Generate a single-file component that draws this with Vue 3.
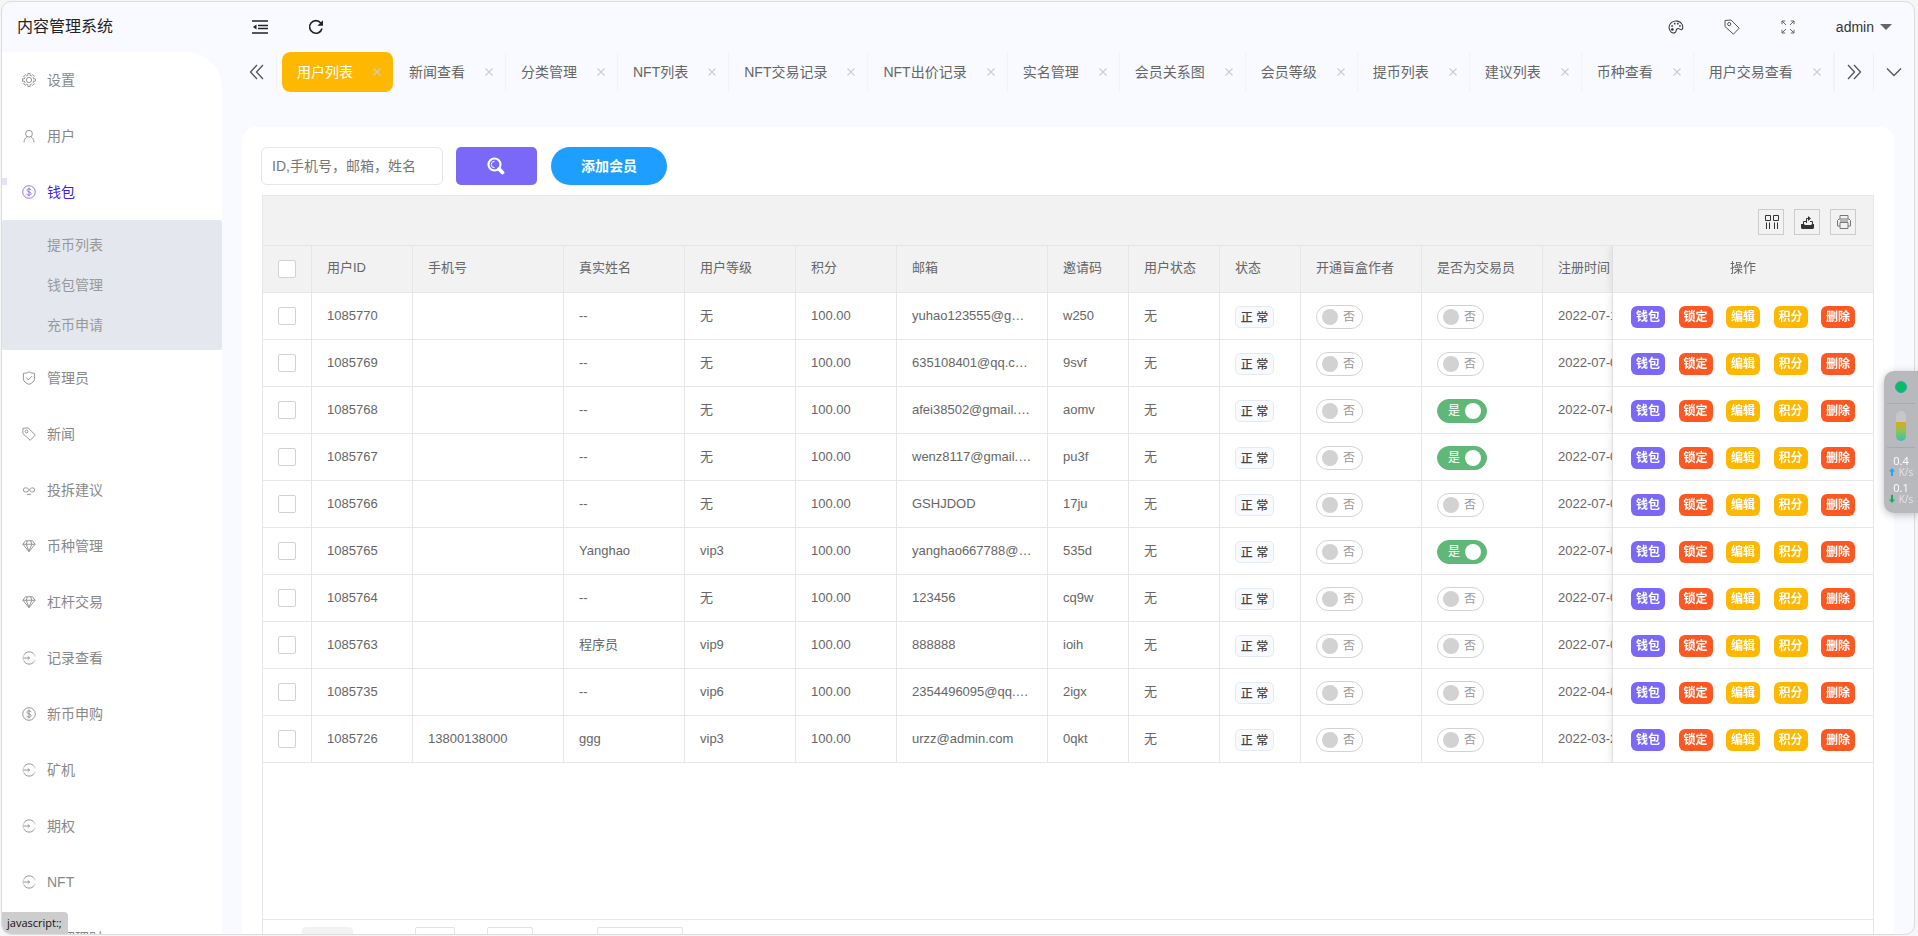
<script setup>
import { ref } from 'vue'

// Outline of an eight-toothed wheel around a central ring.
const wheel = Array.from({ length: 8 }, (_, k) => {
  const at = (r, deg) => {
    const a = ((k * 45 + deg) * Math.PI) / 180
    return `${(8 + r * Math.cos(a)).toFixed(2)} ${(8 + r * Math.sin(a)).toFixed(2)}`
  }
  return `${k ? 'L' : 'M'}${at(5.4, -15)}L${at(7.5, -10)}L${at(7.5, 10)}L${at(5.4, 15)}`
}).join('') + 'zM8 5a3 3 0 1 0 0 6 3 3 0 0 0 0-6z'

const icons = {
  gear: wheel,
  user: 'M8 1.500a3.900 3.900 0 1 0 0 7.800 3.900 3.900 0 0 0 0-7.800zM2.300 15.200c.2-3.200 1.700-5.400 3.700-6.400M13.700 15.200c-.2-3.200-1.700-5.400-3.700-6.400',
  coin: 'M8 .8a7.200 7.200 0 1 0 0 14.400A7.200 7.200 0 0 0 8 .8zM10.300 5.800c-.2-1-1.100-1.500-2.300-1.500S5.700 4.900 5.700 6c0 2.500 4.700 1.300 4.700 3.900 0 1.100-1 1.800-2.400 1.800s-2.300-.7-2.500-1.700M8 3v10',
  shield: 'M8 .9l2 1.200 4.400.6v6.100c0 3-3 5.300-6.400 6.500-3.400-1.200-6.400-3.500-6.400-6.500V2.700l4.400-.6zM4.800 7.600l2.400 2.500 4.200-4.200',
  tag: 'M1 1.500l6-.5 8.200 8.200-5.800 6L1 7.500zM5.200 3.500a1.600 1.600 0 1 0 0 3.200 1.600 1.600 0 0 0 0-3.200z',
  link: 'M4 5.500a2.400 2.400 0 1 0 0 4.800C6.500 10.300 7.700 9.200 8.500 7.900S10.500 5.500 12 5.500a2.400 2.400 0 1 1 0 4.800c-1.500 0-2.700-.9-3.500-2.400S5.500 5.500 4 5.500M5.500 12.900h5',
  gem: 'M4 2h8l3 4-7 8.500L1 6zM1 6h14M4.800 6L8 14l3.200-8M4.800 6L6 2.300M11.200 6L10 2.300',
  enter: 'M14 4A7 7 0 0 0 2.200 4.500M14 12a7 7 0 0 1-11.800-.5M.5 8h8M6.500 6l2.200 2-2.200 2M1.500 6.300l.4-1M1.500 9.700l.4 1M14.700 5v1M14.700 10v1'
}

const menu = [
  { name: '设置', icon: 'gear' },
  { name: '用户', icon: 'user' },
  { name: '钱包', icon: 'coin', active: true, children: ['提币列表', '钱包管理', '充币申请'] },
  { name: '管理员', icon: 'shield' },
  { name: '新闻', icon: 'tag' },
  { name: '投拆建议', icon: 'link' },
  { name: '币种管理', icon: 'gem' },
  { name: '杠杆交易', icon: 'gem' },
  { name: '记录查看', icon: 'enter' },
  { name: '新币申购', icon: 'coin' },
  { name: '矿机', icon: 'enter' },
  { name: '期权', icon: 'enter' },
  { name: 'NFT', icon: 'enter' },
  { name: '质押理财', icon: 'enter' }
]

const tabs = ['用户列表', '新闻查看', '分类管理', 'NFT列表', 'NFT交易记录', 'NFT出价记录', '实名管理', '会员关系图', '会员等级', '提币列表', '建议列表', '币种查看', '用户交易查看']

const columns = [
  { title: '用户ID', cls: 'w100' },
  { title: '手机号', cls: 'w150' },
  { title: '真实姓名', cls: 'w120' },
  { title: '用户等级', cls: 'w110' },
  { title: '积分', cls: 'w100' },
  { title: '邮箱', cls: 'w150' },
  { title: '邀请码', cls: 'w80' },
  { title: '用户状态', cls: 'w90' },
  { title: '状态', cls: 'w80' },
  { title: '开通盲盒作者', cls: 'w120' },
  { title: '是否为交易员', cls: 'w120' },
  { title: '注册时间', cls: 'w150' }
]

const rows = ref([
  { id: '1085770', phone: '', name: '--', level: '无', email: 'yuhao123555@gmail.com', code: 'w250', author: false, trader: false, time: '2022-07-11' },
  { id: '1085769', phone: '', name: '--', level: '无', email: '635108401@qq.com', code: '9svf', author: false, trader: false, time: '2022-07-09' },
  { id: '1085768', phone: '', name: '--', level: '无', email: 'afei38502@gmail.com', code: 'aomv', author: false, trader: true, time: '2022-07-08' },
  { id: '1085767', phone: '', name: '--', level: '无', email: 'wenz8117@gmail.com', code: 'pu3f', author: false, trader: true, time: '2022-07-08' },
  { id: '1085766', phone: '', name: '--', level: '无', email: 'GSHJDOD', code: '17ju', author: false, trader: false, time: '2022-07-07' },
  { id: '1085765', phone: '', name: 'Yanghao', level: 'vip3', email: 'yanghao667788@qq.com', code: '535d', author: false, trader: true, time: '2022-07-06' },
  { id: '1085764', phone: '', name: '--', level: '无', email: '123456', code: 'cq9w', author: false, trader: false, time: '2022-07-05' },
  { id: '1085763', phone: '', name: '程序员', level: 'vip9', email: '888888', code: 'ioih', author: false, trader: false, time: '2022-07-04' },
  { id: '1085735', phone: '', name: '--', level: 'vip6', email: '2354496095@qq.com', code: '2igx', author: false, trader: false, time: '2022-04-02' },
  { id: '1085726', phone: '13800138000', name: 'ggg', level: 'vip3', email: 'urzz@admin.com', code: '0qkt', author: false, trader: false, time: '2022-03-23' }
])

const actions = [
  { name: '钱包', cls: 'violet' },
  { name: '锁定', cls: 'red' },
  { name: '编辑', cls: 'amber' },
  { name: '积分', cls: 'amber' },
  { name: '删除', cls: 'red' }
]
</script>

<template>
  <div class="window">
    <aside class="side">
      <h1 class="brand">内容管理系统</h1>
      <nav class="menu">
        <template v-for="item in menu" :key="item.name">
          <a href="#" class="menu-item" :class="{ active: item.active }">
            <svg class="menu-icon" viewBox="0 0 16 16"><path :d="icons[item.icon]" /></svg>
            <span>{{ item.name }}</span>
          </a>
          <div v-if="item.children" class="submenu">
            <a v-for="child in item.children" :key="child" href="#">{{ child }}</a>
          </div>
        </template>
      </nav>
      <div class="status">javascript:;</div>
    </aside>

    <div class="content">
      <header class="header">
        <div class="header-left">
          <button class="icon-btn" aria-label="收起菜单">
            <svg width="16" height="16" viewBox="0 0 16 16" fill="none" stroke="#222" stroke-width="1.400">
              <path d="M0 2h16M6 6.500h10M6 9.500h10M0 14h16" /><path d="M4.500 5.500v5L1 8z" fill="#222" stroke="none" />
            </svg>
          </button>
          <button class="icon-btn" aria-label="刷新">
            <svg width="16" height="16" viewBox="0 0 16 16" fill="none" stroke="#222" stroke-width="1.600">
              <path d="M14 9.500A6.300 6.300 0 1 1 12.800 4" /><path d="M15 1.200v5.600H9.400z" fill="#222" stroke="none" />
            </svg>
          </button>
        </div>
        <div class="header-right">
          <button class="icon-btn" aria-label="主题">
            <svg width="16" height="14" viewBox="0 0 18 16" fill="none" stroke="#333" stroke-width="1.200">
              <path d="M3.500 13.800C-.2 10.500.5 5.500 4 2.800 8-.2 14 1 16 5c1.200 2.500.9 5.500-.5 6-1.700.5-3-2-5-1-1.800 1-.8 3.200-2.500 4.200-1.300.8-3.300.6-4.500-.4z" />
              <g fill="#333" stroke="none"><circle cx="4.800" cy="10.800" r="1.500" /><circle cx="4.500" cy="6.800" r="1" /><circle cx="7.500" cy="4.200" r="1" /><circle cx="11" cy="4.200" r="1" /><circle cx="13.500" cy="6.800" r="1" /></g>
            </svg>
          </button>
          <button class="icon-btn" aria-label="便签">
            <svg width="16" height="16" viewBox="0 0 16 16" fill="none" stroke="#555" stroke-width="1"><path :d="icons.tag" /></svg>
          </button>
          <button class="icon-btn" aria-label="全屏">
            <svg width="14" height="14" viewBox="0 0 14 14" fill="none" stroke="#666" stroke-width="1">
              <path d="M1 4.200V1h3.200M1 1l4 4M9.800 1H13v3.200M13 1L9 5M1 9.800V13h3.200M1 13l4-4M13 9.800V13H9.800M13 13L9 9" />
            </svg>
          </button>
          <button class="user-btn">admin<i class="caret"></i></button>
        </div>
      </header>

      <div class="tabbar">
        <button class="tab-ctl prev" aria-label="向左">
          <svg width="16" height="16" viewBox="0 0 16 16"><path d="M8 1L1.500 8 8 15M14 1L7.500 8l6.500 7" /></svg>
        </button>
        <div class="tabs">
          <div v-for="(tab, i) in tabs" :key="tab" class="tab" :class="{ current: i === 0 }">
            <a href="#">{{ tab }}</a>
            <button class="tab-close" :aria-label="'关闭' + tab">
              <svg width="8" height="8" viewBox="0 0 8 8"><path d="M.5.5l7 7M7.500.5l-7 7" /></svg>
            </button>
          </div>
        </div>
        <button class="tab-ctl next" aria-label="向右">
          <svg width="16" height="16" viewBox="0 0 16 16"><path d="M2 1l6.500 7L2 15M8 1l6.500 7L8 15" /></svg>
        </button>
        <button class="tab-ctl" aria-label="更多">
          <svg width="16" height="16" viewBox="0 0 16 16"><path d="M1 4.500l7 7 7-7" /></svg>
        </button>
      </div>

      <main class="card">
        <form class="search" @submit.prevent>
          <input type="text" aria-label="搜索" placeholder="ID,手机号，邮箱，姓名" />
          <button class="btn-search" aria-label="查询">
            <svg width="18" height="18" viewBox="0 0 18 18" fill="none" stroke="#fff">
              <circle cx="7.500" cy="7.500" r="6" stroke-width="2.200" /><path d="M12 12l3.500 3.500" stroke-width="3.800" stroke-linecap="round" /><path d="M7.500 4.300a3.200 3.200 0 0 0 0 6.400" stroke-width="1" />
            </svg>
          </button>
          <button class="btn-add">添加会员</button>
        </form>

        <section class="grid">
          <div class="tools">
            <button aria-label="筛选列">
              <svg width="14" height="14" viewBox="0 0 14 14" fill="none" stroke="#333"><path d="M.5.500h5v5h-5zM8.500.500h5v5h-5zM1.500 7.500V14M4.500 7.500V14M9.500 7.500V14M12.500 7.500V14" /></svg>
            </button>
            <button aria-label="导出">
              <svg width="14" height="14" viewBox="0 0 14 14" fill="none" stroke="#333"><path d="M2.500 9V6.500H5M9 6.500h2.500V9M5.500 8V3.500h2" /><path d="M7 1l3 2.500L7 6zM0 9h3l1 1h6l1-1h2v4l-1 1H1l-1-1z" fill="#333" stroke="none" /></svg>
            </button>
            <button aria-label="打印">
              <svg width="14" height="14" viewBox="0 0 14 14" fill="none" stroke="#777"><path d="M3 4V.500h8V4M3 11H.5V5.500L2 4h10l1.500 1.500V11H11M3 7.500h8v6H3zM3 6h8" /></svg>
            </button>
          </div>

          <div class="table-wrap">
            <table>
              <thead>
                <tr>
                  <th class="check"><input type="checkbox" aria-label="全选" /></th>
                  <th v-for="col in columns" :key="col.title" :class="col.cls">{{ col.title }}</th>
                  <th class="ops">操作</th>
                </tr>
              </thead>
              <tbody>
                <tr v-for="row in rows" :key="row.id">
                  <td class="check"><input type="checkbox" :aria-label="'选择' + row.id" /></td>
                  <td>{{ row.id }}</td>
                  <td>{{ row.phone }}</td>
                  <td>{{ row.name }}</td>
                  <td>{{ row.level }}</td>
                  <td>100.00</td>
                  <td>{{ row.email }}</td>
                  <td>{{ row.code }}</td>
                  <td>无</td>
                  <td class="ctl"><button class="state">正 常</button></td>
                  <td v-for="key in ['author', 'trader']" :key="key" class="ctl">
                    <label class="switch" :class="{ on: row[key] }">
                      <input v-model="row[key]" type="checkbox" />
                      <span>{{ row[key] ? '是' : '否' }}</span><i></i>
                    </label>
                  </td>
                  <td class="time">{{ row.time }}</td>
                  <td class="ops ctl">
                    <div class="actions">
                      <button v-for="a in actions" :key="a.name" :class="a.cls">{{ a.name }}</button>
                    </div>
                  </td>
                </tr>
              </tbody>
            </table>
          </div>

          <footer class="pager">
            <button class="page current" aria-label="当前页"></button>
            <input type="text" class="page jump" aria-label="跳转页码" />
            <button class="page go" aria-label="跳转"></button>
            <select class="page size" aria-label="每页条数"></select>
          </footer>
        </section>
      </main>
    </div>

    <div class="monitor">
      <i class="dot"></i>
      <div class="gauge"><i></i></div>
      <div class="rates">
        <b>0.4</b>
        <span><svg width="6" height="8" viewBox="0 0 6 8"><path d="M3 0l3 3.500H4V8H2V3.500H0z" fill="#1ba8ff" /></svg>K/s</span>
        <b>0.1</b>
        <span><svg width="6" height="8" viewBox="0 0 6 8"><path d="M3 8l3-3.500H4V0H2v4.500H0z" fill="#08b35c" /></svg>K/s</span>
      </div>
    </div>
  </div>
</template>

<style>
body { background: #f6f6f6; overflow: hidden; }
</style>

<style scoped>
* { box-sizing: border-box; }
.window {
  display: flex;
  height: calc(100vh - 2px);
  margin: 1px 3px 1px 1px;
  border: 1px solid #dcdcdc;
  border-radius: 10px;
  overflow: hidden;
  background: #f9faff;
  font: 14px/20px "Liberation Sans", "Noto Sans CJK SC", sans-serif;
  color: #666;
}
button, input, select { font: inherit; margin: 0; }
button { border: 0; padding: 0; background: none; color: inherit; cursor: pointer; }
a { color: inherit; text-decoration: none; }

.side { position: relative; flex: 0 0 220px; display: flex; flex-direction: column; }
.brand { flex: none; margin: 0; height: 50px; padding-left: 15px; font-size: 16px; font-weight: 400; line-height: 50px; color: #222; }
.menu { flex: 1; min-height: 0; overflow: hidden; background: #fff; border-top-right-radius: 36px; }
.menu-item { display: flex; align-items: center; gap: 11px; height: 56px; padding-left: 20px; color: #888; }
.menu-icon { width: 14px; height: 14px; fill: none; stroke: currentColor; stroke-width: 1; }
.menu-item.active { position: relative; color: #3c1df2; }
.menu-item.active .menu-icon { color: #8a63f8; }
.menu-item.active::before { content: ""; position: absolute; left: 0; top: 14px; width: 5px; height: 7px; background: #e5e0ff; }
.submenu { padding: 5px 0; background: #e4e7ee; border-radius: 2px; }
.submenu a { display: block; padding-left: 45px; line-height: 40px; color: #999; }
.status { position: absolute; left: 0; bottom: 0; height: 22px; padding: 0 6px 0 5px; background: #cdcdcd; border-top-right-radius: 4px; font: 11px/22px "Open Sans", "Noto Sans", sans-serif; color: #111; }

.content { flex: 1; min-width: 0; display: flex; flex-direction: column; }
.header { flex: none; display: flex; align-items: center; justify-content: space-between; height: 50px; padding: 0 22px 0 30px; color: #333; }
.header-left, .header-right { display: flex; align-items: center; gap: 40px; }
.icon-btn { display: flex; justify-content: center; align-items: center; width: 16px; height: 16px; }
.user-btn { display: flex; align-items: center; gap: 6px; }
.caret { border: 6px solid transparent; border-top-color: #666; border-bottom: 0; }

.tabbar { flex: none; display: flex; height: 40px; }
.tab-ctl { flex: 0 0 40px; display: flex; align-items: center; justify-content: center; }
.tab-ctl.prev { flex-basis: 55px; padding-left: 15px; border-right: 1px solid #f2f2f5; }
.tab-ctl.next { border-left: 1px solid #f2f2f2; border-right: 1px solid #f2f2f5; }
.tab-ctl svg { fill: none; stroke: #555; stroke-width: 1.300; }
.tabs { flex: 1; min-width: 0; display: flex; margin-left: 5px; overflow: hidden; }
.tab { flex: none; display: flex; align-items: center; gap: 20px; padding: 0 12px 0 15px; border-right: 1px solid #f2f3f7; white-space: nowrap; }
.tab-close { display: flex; }
.tab-close svg { fill: none; stroke: #ccc; stroke-width: 1.100; }
.tab.current { background: #ffb800; background-clip: padding-box; border-color: transparent; border-radius: 8px; color: #fff; }

.card { flex: 1; min-height: 0; display: flex; flex-direction: column; margin: 35px 20px 0; padding: 20px 20px 0; background: #fff; border-radius: 14px 14px 0 0; overflow: hidden; }
.search { flex: none; display: flex; height: 38px; margin: 0 0 10px -1px; }
.search input { width: 182px; padding: 0 10px; border: 1px solid #e6e6e6; border-radius: 6px; outline: 0; background: #fff; }
.search input::placeholder { color: #777; opacity: 1; }
.btn-search { display: flex; align-items: center; justify-content: center; width: 81px; margin-left: 13px; padding-right: 2px; border-radius: 5px; background: #7b68f8; }
.btn-add { width: 116px; margin-left: 14px; border-radius: 19px; background: #1e9fff; color: #fff; font-weight: 700; }

.grid { flex: 1; min-height: 0; display: flex; flex-direction: column; border: 1px solid #e6e6e6; border-bottom: 0; }
.tools { flex: none; display: flex; justify-content: flex-end; align-items: center; gap: 10px; height: 50px; padding: 3px 17px 0 0; background: #f2f2f2; border-bottom: 1px solid #e6e6e6; }
.tools button { display: flex; align-items: center; justify-content: center; width: 26px; height: 26px; padding-left: 2px; border: 1px solid #ccc; }
.table-wrap { flex: 1; min-height: 0; overflow: hidden; }
table { width: 1692px; min-width: 100%; table-layout: fixed; border-collapse: separate; border-spacing: 0; font-size: 13px; }
th, td { height: 47px; padding: 0 15px 1px; border-right: 1px solid #e6e6e6; border-bottom: 1px solid #e6e6e6; text-align: left; font-weight: 400; white-space: nowrap; overflow: hidden; text-overflow: ellipsis; }
td { background: #fff; }
th { padding-bottom: 2px; background: #f2f2f2; }
td.ctl { padding-top: 2px; padding-bottom: 0; }
.check { width: 49px; padding-bottom: 0; }
.check input { display: block; appearance: none; width: 18px; height: 18px; border: 1px solid #d2d2d2; border-radius: 2px; background: #fff; }
.w80 { width: 81px; }
.w90 { width: 91px; }
.w100 { width: 101px; }
.w110 { width: 111px; }
.w120 { width: 121px; }
.w150 { width: 151px; }
.ops { position: sticky; right: 0; width: 261px; padding-left: 18px; padding-right: 18px; border-left: 1px solid #e0e0e0; border-right: 0; box-shadow: -1px 0 8px rgba(0, 0, 0, .1); clip-path: inset(0 0 0 -12px); overflow: visible; }
th.ops { text-align: center; }
.actions { display: flex; justify-content: space-between; }
.actions button { width: 34px; height: 22px; border-radius: 6px; color: #fff; font-size: 12px; font-weight: 700; line-height: 22px; }
.violet { background: #7b68f8; }
.red { background: #ff5722; }
.amber { background: #ffb800; }
.state { display: block; width: 39px; height: 22px; padding-top: 1px; border: 1px solid #e4ebf0; border-radius: 5px; background: #f9faff; color: #444; font-size: 12px; font-weight: 500; line-height: 20px; }
.switch { position: relative; display: flex; align-items: center; flex-direction: row-reverse; justify-content: space-between; width: 47px; height: 24px; padding: 0 7px 0 5px; border: 1px solid #d2d2d2; border-radius: 12px; background: #fff; color: #999; font-size: 12px; }
.switch input { position: absolute; inset: 0; opacity: 0; }
.switch i { width: 16px; height: 16px; border-radius: 50%; background: #d2d2d2; }
.switch.on { flex-direction: row; width: 50px; padding: 0 5px 0 10px; border-color: #5fb878; background: #5fb878; color: #fff; }
.switch.on i { background: #fff; }
td.time { text-overflow: clip; }

.pager { flex: none; display: flex; align-items: flex-start; height: 15px; padding: 7px 0 0 39px; border-top: 1px solid #e6e6e6; overflow: hidden; }
.page { flex: none; height: 28px; border: 1px solid #e2e2e2; border-radius: 2px; background: #fff; }
.page.current { width: 51px; border-color: #f2f2f2; background: #f2f2f2; border-radius: 4px; }
.page.jump { width: 40px; margin-left: 62px; }
.page.go { width: 46px; margin-left: 32px; }
.page.size { width: 86px; margin-left: 64px; appearance: none; }

.monitor { position: fixed; right: 0; top: 371px; width: 34px; height: 142px; border-radius: 10px 0 0 10px; background: #b8b9bd; box-shadow: 0 2px 8px rgba(0, 0, 0, .25); display: flex; flex-direction: column; align-items: center; }
.dot { width: 12px; height: 12px; margin: 10px 0; border-radius: 50%; background: #05bd63; border: 1px solid #3f9db0; }
.gauge { display: flex; justify-content: center; width: 28px; height: 45px; padding: 7px 0; border: solid #a7a9ae; border-width: 1px 0; }
.gauge i { width: 10px; height: 30px; border-radius: 5px; background: linear-gradient(#c6c7ca 11px, #e0a81c 11px, #8cc455 20px, #35c2b3 30px); }
.rates { display: flex; flex-direction: column; padding-top: 7px; font: 11px/12px "Open Sans", "Noto Sans", sans-serif; color: #fff; text-align: center; }
.rates b { font-weight: 400; }
.rates span { display: flex; align-items: center; gap: 4px; height: 9px; margin-bottom: 6px; font-size: 10px; color: #e4e4e6; }
</style>
